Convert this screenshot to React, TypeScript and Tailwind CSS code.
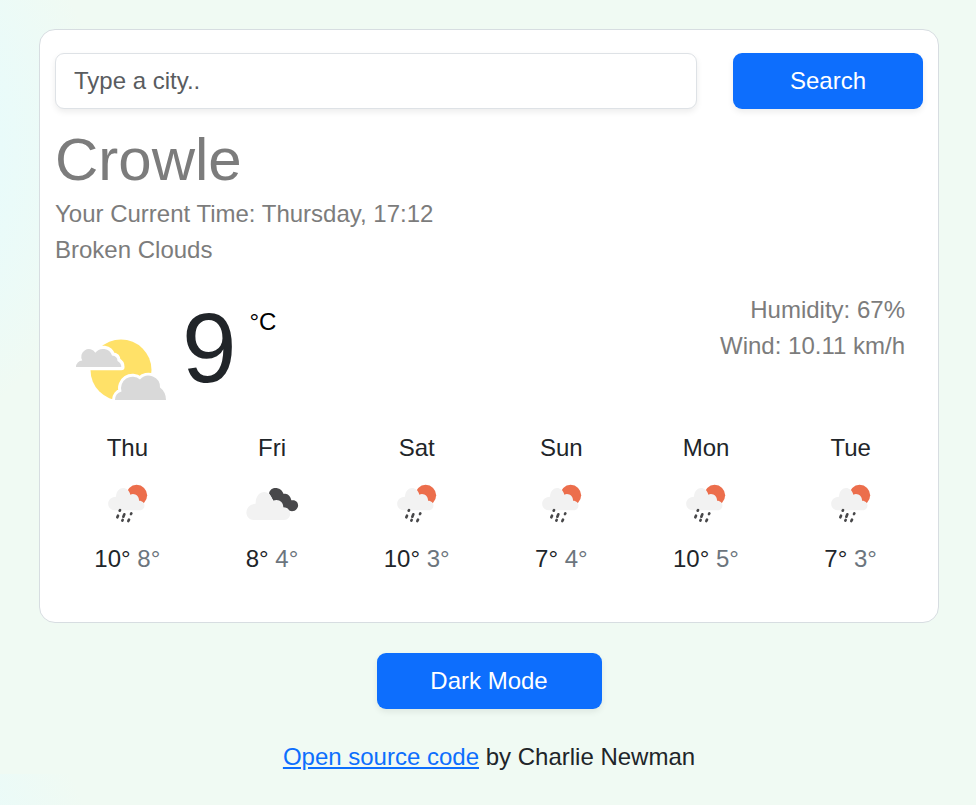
const days = [
  { day: "Thu", icon: "rain", max: 10, min: 8 },
  { day: "Fri", icon: "clouds", max: 8, min: 4 },
  { day: "Sat", icon: "rain", max: 10, min: 3 },
  { day: "Sun", icon: "rain", max: 7, min: 4 },
  { day: "Mon", icon: "rain", max: 10, min: 5 },
  { day: "Tue", icon: "rain", max: 7, min: 3 },
];

const smallCloud =
  "M76 367A6.500 6.500 0 0 1 82.300 360.500A6.700 6.700 0 0 1 95.300 352.800A9.500 9.500 0 0 1 112 355.500Q117.500 356 117.500 361Q121.300 363 121.300 367Z";
const largeCloud =
  "M115 400A9 9 0 0 1 121.500 391.500A11.500 11.500 0 0 1 140 379.500A11.500 11.500 0 0 1 160 387.500Q166 392 166 400Z";

function BrokenCloudsIcon() {
  return (
    <svg className="mt-[46px] ml-[16px] h-[62px] w-[92px]" viewBox="75 339 92 62">
      <circle cx="121" cy="370" r="30.500" fill="#ffe168" />
      <path d={smallCloud} fill="#d9d9d9" stroke="#fff" strokeWidth="6.500" strokeLinejoin="round" />
      <path d={largeCloud} fill="#d9d9d9" stroke="#fff" strokeWidth="6" strokeLinejoin="round" />
      <path d={smallCloud} fill="#d9d9d9" />
      <path d={largeCloud} fill="#d9d9d9" />
    </svg>
  );
}

function RainIcon() {
  return (
    <svg className="h-[70px] w-[80px]" viewBox="0 0 240 210">
      <circle cx="140" cy="76" r="31.500" fill="#ec6e4c" />
      <path
        d="M73 121C47 118 48 81 78 80C80 47 114 46 121 74C135 68 148 79 147 92C169 92 169 121 147 121Z"
        fill="#f2f2f2"
      />
      <g stroke="#48484a" strokeWidth="8" strokeLinecap="round">
        <path d="M90 120.500L89 122M84 137L82 142M103 133L100 140M124 130L123 132M98 150L97 152M117 149L115 153" />
      </g>
    </svg>
  );
}

function CloudsIcon() {
  return (
    <svg className="ml-[2px] h-[70px] w-[80px]" viewBox="0 0 240 210">
      <path
        d="M102 70C106 48 138 48 146 72C158 69 167 79 169 91C187 87 195 106 185 117C179 125 167 125 158 120L125 108Z"
        fill="#48484a"
      />
      <path
        d="M56 150C26 149 26 103 62 101C61 60 106 53 113 93C129 85 145 94 145 112C172 112 172 149 147 150Z"
        fill="#f2f2f2"
      />
    </svg>
  );
}

export default function App() {
  return (
    <div className="h-[805px] w-full overflow-hidden bg-[#f0faf3] bg-[radial-gradient(circle_at_-222px_155px,#e9fbfa_222px,#f0faf3_331px)] bg-[length:976px_774px] pt-[29px] font-['Liberation_Sans',Arial,sans-serif] text-2xl leading-9 text-[#212529]">
      <main className="ml-[39px] h-[594px] w-[900px] rounded-2xl border border-[#d7dde1] bg-white px-[15px] pt-[23px]">
        <form className="flex justify-between" onSubmit={(e) => e.preventDefault()}>
          <input
            placeholder="Type a city.."
            className="h-14 w-[642px] rounded-[9px] border border-[#dee2e6] bg-white px-[18px] shadow-[0_3px_6px_rgba(0,0,0,0.075)] outline-none placeholder:text-[#595c5f]"
          />
          <button className="h-14 w-[190px] rounded-[9px] bg-[#0d6efd] text-white shadow-[0_3px_6px_rgba(0,0,0,0.075)]">
            Search
          </button>
        </form>
        <h1 className="mt-[15px] h-[72px] text-[60px] leading-[72px] text-[#7c7c7c]">Crowle</h1>
        <p className="text-[#7c7c7c]">Your Current Time: Thursday, 17:12</p>
        <p className="text-[#7c7c7c]">Broken Clouds</p>
        <section className="mt-[24px] flex h-[138px]">
          <div className="-ml-[1px] w-[124px] pt-[1px] pl-[5px]">
            <BrokenCloudsIcon />
          </div>
          <strong className="ml-[4px] text-[98px] leading-[112px] font-normal">9</strong>
          <span className="mt-[12px] ml-[13px] text-black">°C</span>
          <div className="ml-auto pr-[18px] text-right text-[#7c7c7c]">
            <p>Humidity: 67%</p>
            <p>Wind: 10.11 km/h</p>
          </div>
        </section>
        <section className="grid grid-cols-6 text-center">
          {days.map((d) => (
            <div key={d.day} className="flex flex-col items-center">
              <span>{d.day}</span>
              <div className="mt-[4px] ml-[5px] h-[71px]">{d.icon === "rain" ? <RainIcon /> : <CloudsIcon />}</div>
              <p>
                {d.max}° <span className="text-[#6c757d]">{d.min}°</span>
              </p>
            </div>
          ))}
        </section>
      </main>
      <button className="mt-[30px] ml-[377px] block h-14 w-[225px] rounded-[9px] bg-[#0d6efd] pr-px text-white shadow-[0_3px_6px_rgba(0,0,0,0.075)]">
        Dark Mode
      </button>
      <footer className="mt-[30px] pl-[2px] text-center">
        <a href="#" className="text-[#0d6efd] underline">Open source code</a> by Charlie Newman
      </footer>
    </div>
  );
}
